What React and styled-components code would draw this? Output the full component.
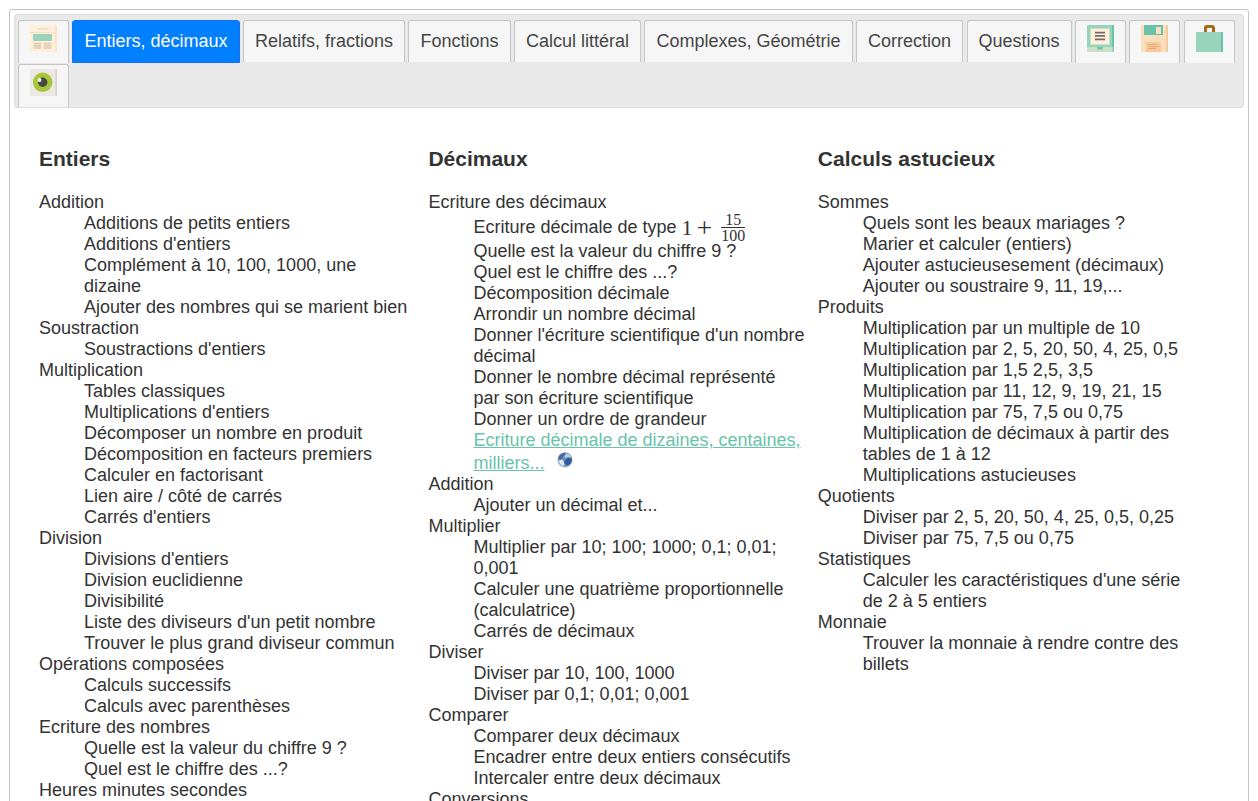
import React from "react";
import styled, { createGlobalStyle, css } from "styled-components";

const GlobalStyle = createGlobalStyle`
  * {
    box-sizing: border-box;
  }

  html {
    scrollbar-width: none;
  }

  body {
    margin: 9px;
    background: #ffffff;
    color: #333333;
    font-family: "Liberation Sans", Arial, sans-serif;
    font-size: 18px;
    line-height: 21px;
  }
`;

const HomeIcon = () => (
  <Icon viewBox="0 0 27 27" aria-hidden="true">
    <rect width="27" height="27" rx="1" fill="#ffefdb" />
    <path d="M25 0h1a1 1 0 0 1 1 1v25a1 1 0 0 1-1 1h-1z" fill="#fae3c8" />
    <path d="M0 7h27v1H0z" fill="#f3dfc8" />
    <path d="M7 3.300h11v1.400H7z" fill="#ecdac3" />
    <path d="M3 9h19v7H3z" fill="#98d4bc" />
    <path d="M3.500 17.500h8V24h-8zM13.500 17.500h8V24h-8z" fill="#eedcc6" />
    <path d="M4 18h7v1H4zM4 20.300h7v1H4zM4 22.600h7v1H4zM14 18h7v1h-7zM14 20.300h7v1h-7zM14 22.600h7v1h-7z" fill="#d8c8b4" />
  </Icon>
);

const EyeIcon = () => (
  <Icon viewBox="0 0 27 27" aria-hidden="true">
    <rect width="27" height="27" rx="1" fill="#ece7e0" />
    <path d="M25.500 0h.5a1 1 0 0 1 1 1v25a1 1 0 0 1-1 1h-.5z" fill="#d5d0ca" />
    <circle cx="12.700" cy="13.300" r="9.700" fill="#a4c63a" />
    <circle cx="12.700" cy="13.300" r="4.700" fill="#4b4743" />
    <circle cx="9.500" cy="11" r="2" fill="#f4f3e4" />
  </Icon>
);

const ScreenIcon = () => (
  <Icon viewBox="0 0 27 27" aria-hidden="true">
    <rect width="27" height="27" rx="1" fill="#98d4bc" />
    <path d="M25 0h1a1 1 0 0 1 1 1v21h-2z" fill="#68c3ab" />
    <path d="M0 22h27v4a1 1 0 0 1-1 1H1a1 1 0 0 1-1-1z" fill="#c9dfc8" />
    <path d="M25 22h2v4a1 1 0 0 1-1 1h-1z" fill="#98d4bc" />
    <rect x="3" y="3" width="20" height="17" rx="1" fill="#c9dfc8" />
    <rect x="4" y="4" width="18" height="15" fill="#ffefdb" />
    <path d="M8 6.800h10v1.800H8zM8 10h10v1.800H8zM8 13.400h10v1.800H8z" fill="#726b65" />
    <path d="M10 22h6l-1 2.500h-4z" fill="#68c3ab" />
  </Icon>
);

const DiskIcon = () => (
  <Icon viewBox="0 0 27 27" aria-hidden="true">
    <rect width="27" height="27" rx="1" fill="#f9dfbc" />
    <path d="M25 0h1a1 1 0 0 1 1 1v25a1 1 0 0 1-1 1h-1z" fill="#f5c89d" />
    <path d="M3 0h19v10H3z" fill="#68c3ab" />
    <path d="M15 2h5v7h-5z" fill="#f9dfbc" />
    <path d="M5 17h15v10H5z" fill="#f5c89d" />
    <path d="M7 19h9v1H7zM8 21h10v1H8zM7 23h8v1H7z" fill="#f0a873" />
  </Icon>
);

const BagIcon = () => (
  <Icon viewBox="0 0 27 27" aria-hidden="true">
    <rect y="7" width="27" height="20" rx="1" fill="#98d4bc" />
    <path d="M25 7h1a1 1 0 0 1 1 1v18a1 1 0 0 1-1 1h-1z" fill="#68c3ab" />
    <path d="M9.500 7V3a1.500 1.500 0 0 1 1.500-1.500h5A1.500 1.500 0 0 1 17.500 3v4" fill="none" stroke="#a86a12" strokeWidth="3" />
  </Icon>
);

const GlobeIcon = () => (
  <Globe viewBox="0 0 16 16" role="img" aria-label="En ligne">
    <circle cx="8" cy="8" r="7.700" fill="#cfd4dc" />
    <circle cx="8" cy="7.600" r="7.200" fill="#6f8fbf" />
    <path d="M1.500 5.500C2.500 3 5 1 8 .800l.5 1.700L6 4.500 5 7 2.500 8z" fill="#46699f" />
    <path d="M9 1.500l3.500 1 2 3-2 .5L11 5 8.500 6 7.500 4z" fill="#b9cbe2" />
    <path d="M10.500 6l3-.5 1.300 2.500-.8 3-3 2.500L7.500 12 7 9z" fill="#2f5a9a" />
    <path d="M1.500 8.500L5 7.500l2 2 .5 3.500-2 1L3 12z" fill="#dce6f2" />
  </Globe>
);

const tabs = [
  { label: "Accueil", icon: HomeIcon },
  { label: "Entiers, décimaux", active: true },
  { label: "Relatifs, fractions" },
  { label: "Fonctions" },
  { label: "Calcul littéral" },
  { label: "Complexes, Géométrie" },
  { label: "Correction" },
  { label: "Questions" },
  { label: "Diaporama", icon: ScreenIcon },
  { label: "Enregistrer", icon: DiskIcon },
  { label: "Outils", icon: BagIcon },
  { label: "Aperçu", icon: EyeIcon },
];

const columns = [
  {
    title: "Entiers",
    groups: [
      {
        name: "Addition",
        items: [
          "Additions de petits entiers",
          "Additions d'entiers",
          "Complément à 10, 100, 1000, une dizaine",
          "Ajouter des nombres qui se marient bien",
        ],
      },
      { name: "Soustraction", items: ["Soustractions d'entiers"] },
      {
        name: "Multiplication",
        items: [
          "Tables classiques",
          "Multiplications d'entiers",
          "Décomposer un nombre en produit",
          "Décomposition en facteurs premiers",
          "Calculer en factorisant",
          "Lien aire / côté de carrés",
          "Carrés d'entiers",
        ],
      },
      {
        name: "Division",
        items: [
          "Divisions d'entiers",
          "Division euclidienne",
          "Divisibilité",
          "Liste des diviseurs d'un petit nombre",
          "Trouver le plus grand diviseur commun",
        ],
      },
      {
        name: "Opérations composées",
        items: ["Calculs successifs", "Calculs avec parenthèses"],
      },
      {
        name: "Ecriture des nombres",
        items: ["Quelle est la valeur du chiffre 9 ?", "Quel est le chiffre des ...?"],
      },
      { name: "Heures minutes secondes", items: [] },
    ],
  },
  {
    title: "Décimaux",
    groups: [
      {
        name: "Ecriture des décimaux",
        items: [
          { text: "Ecriture décimale de type", formula: true },
          "Quelle est la valeur du chiffre 9 ?",
          "Quel est le chiffre des ...?",
          "Décomposition décimale",
          "Arrondir un nombre décimal",
          "Donner l'écriture scientifique d'un nombre décimal",
          "Donner le nombre décimal représenté par son écriture scientifique",
          "Donner un ordre de grandeur",
          { text: "Ecriture décimale de dizaines, centaines, milliers...", online: true },
        ],
      },
      { name: "Addition", items: ["Ajouter un décimal et..."] },
      {
        name: "Multiplier",
        items: [
          "Multiplier par 10; 100; 1000; 0,1; 0,01; 0,001",
          "Calculer une quatrième proportionnelle (calculatrice)",
          "Carrés de décimaux",
        ],
      },
      {
        name: "Diviser",
        items: ["Diviser par 10, 100, 1000", "Diviser par 0,1; 0,01; 0,001"],
      },
      {
        name: "Comparer",
        items: [
          "Comparer deux décimaux",
          "Encadrer entre deux entiers consécutifs",
          "Intercaler entre deux décimaux",
        ],
      },
      { name: "Conversions", items: [] },
    ],
  },
  {
    title: "Calculs astucieux",
    groups: [
      {
        name: "Sommes",
        items: [
          "Quels sont les beaux mariages ?",
          "Marier et calculer (entiers)",
          "Ajouter astucieusesement (décimaux)",
          "Ajouter ou soustraire 9, 11, 19,...",
        ],
      },
      {
        name: "Produits",
        items: [
          "Multiplication par un multiple de 10",
          "Multiplication par 2, 5, 20, 50, 4, 25, 0,5",
          "Multiplication par 1,5 2,5, 3,5",
          "Multiplication par 11, 12, 9, 19, 21, 15",
          "Multiplication par 75, 7,5 ou 0,75",
          "Multiplication de décimaux à partir des tables de 1 à 12",
          "Multiplications astucieuses",
        ],
      },
      {
        name: "Quotients",
        items: ["Diviser par 2, 5, 20, 50, 4, 25, 0,5, 0,25", "Diviser par 75, 7,5 ou 0,75"],
      },
      {
        name: "Statistiques",
        items: ["Calculer les caractéristiques d'une série de 2 à 5 entiers"],
      },
      {
        name: "Monnaie",
        items: ["Trouver la monnaie à rendre contre des billets"],
      },
    ],
  },
];

const Exercise = ({ item }) => {
  if (item.formula) {
    return (
      <FormulaItem>
        {item.text}
        <Formula>
          <span>1</span>
          <Plus>+</Plus>
          <Fraction>
            <Numerator>15</Numerator>
            <span>100</span>
          </Fraction>
        </Formula>
      </FormulaItem>
    );
  }
  if (item.online) {
    return (
      <Item>
        <OnlineLink href="#dizaines">{item.text}</OnlineLink>
        <GlobeIcon />
      </Item>
    );
  }
  return <Item>{item}</Item>;
};

const App = () => {
  return (
    <>
      <GlobalStyle />
      <Frame>
        <nav>
          <TabList>
            {tabs.map(({ label, icon: TabIcon, active }) => (
              <li key={label}>
                <Tab href="#exercices" $active={active} $icon={!!TabIcon} aria-label={label}>
                  {TabIcon ? <TabIcon /> : label}
                </Tab>
              </li>
            ))}
          </TabList>
        </nav>
        <Panel id="exercices">
          {columns.map((column) => (
            <Column key={column.title}>
              <Title>{column.title}</Title>
              <Groups>
                {column.groups.map((group) => (
                  <React.Fragment key={group.name}>
                    <dt>{group.name}</dt>
                    {group.items.map((item) => (
                      <Exercise key={item.text || item} item={item} />
                    ))}
                  </React.Fragment>
                ))}
              </Groups>
            </Column>
          ))}
        </Panel>
      </Frame>
    </>
  );
};

export default App;

const Frame = styled.div`
  padding: 4px;
  border: 1px solid #c5c5c5;
  border-radius: 3px;
`;

const TabList = styled.ul`
  display: flex;
  flex-wrap: wrap;
  align-items: flex-start;
  justify-content: space-between;
  gap: 1px 3px;
  margin: 0;
  padding: 5px 8px 0 3px;
  list-style: none;
  background: #e9e9e9;
  border: 1px solid #dddddd;
  border-radius: 3px;
`;

const Tab = styled.a`
  display: block;
  padding: 10px 11px;
  border: 1px solid #c5c5c5;
  border-bottom: 0;
  border-radius: 3px 3px 0 0;
  background: #f6f6f6;
  color: #454545;
  text-decoration: none;
  white-space: nowrap;

  ${({ $icon }) =>
    $icon &&
    css`
      padding: 4px 11px 11px;
    `}

  ${({ $active }) =>
    $active &&
    css`
      padding-bottom: 10px;
      border: 1px solid #1a6cff;
      background: #007fff;
      color: #ffffff;
    `}
`;

const Icon = styled.svg`
  display: block;
  width: 27px;
  height: 27px;
`;

const Globe = styled.svg`
  width: 16px;
  height: 16px;
  margin: 1px 0 1px 13px;
`;

const Panel = styled.main`
  display: grid;
  grid-template-columns: repeat(3, 33%);
  padding: 18px 25px;
`;

const Column = styled.section`
  padding-right: 12px;
`;

const Title = styled.h3`
  margin: 21px 0;
  font-size: 21px;
  line-height: 24px;
`;

const Groups = styled.dl`
  margin: 0;
`;

const Item = styled.dd`
  margin: 0 0 0 45px;
`;

const FormulaItem = styled(Item)`
  display: flex;
  align-items: center;
  gap: 5px;
  height: 28px;
`;

const Formula = styled.span`
  display: flex;
  align-items: center;
  font-family: "Liberation Serif", "Times New Roman", serif;
  font-size: 22px;
`;

const Plus = styled.span`
  margin: 0 9px 0 4px;
  font-size: 28px;
`;

const Fraction = styled.span`
  display: flex;
  flex-direction: column;
  align-items: center;
  font-size: 16px;
  line-height: 15px;
`;

const Numerator = styled.span`
  width: 100%;
  border-bottom: 1px solid #333333;
  text-align: center;
`;

const OnlineLink = styled.a`
  color: #68c3ab;
`;
